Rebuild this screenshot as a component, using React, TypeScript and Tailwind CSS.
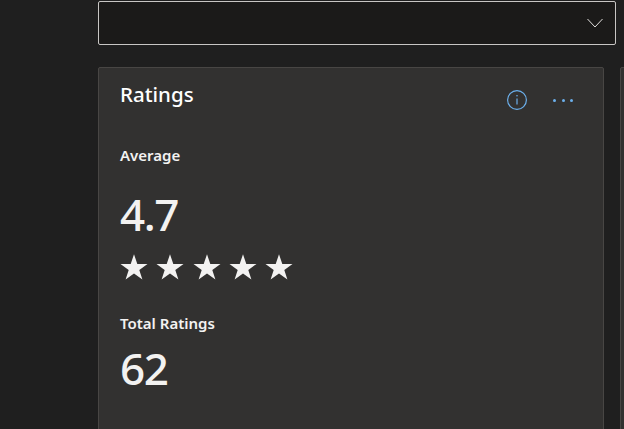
function Star() {
  return (
    <svg width="28" height="28" viewBox="0 0 28 28" className="shrink-0">
      <path d="M14 1.2l3.300 9.700h10.200l-8.200 6 3.100 9.700-8.400-6-8.400 6 3.100-9.700-8.200-6h10.200z" fill="#f3f2f1" />
    </svg>
  );
}

function InfoIcon() {
  return (
    <svg width="20" height="20" viewBox="0 0 20 20" fill="none" stroke="#6cb0ec" className="shrink-0">
      <circle cx="10" cy="10" r="9.400" strokeWidth="1.200" />
      <path d="M10 8.500v6" strokeWidth="1.200" />
      <circle cx="10" cy="5.800" r="0.800" fill="#6cb0ec" stroke="none" />
    </svg>
  );
}

export default function App() {
  return (
    <div className="flex h-[429px] w-[624px] overflow-hidden bg-[#1f1f1f] font-['Noto_Sans',sans-serif] text-[#f3f2f1]">
      <div className="w-[98px] shrink-0" />
      <div className="flex w-[518px] shrink-0 flex-col">
        <div className="mt-px flex h-[44px] shrink-0 items-center justify-end rounded-[2px] border border-[#c8c6c4] bg-[#1b1a19] pr-[12px]">
          <svg width="16" height="10" viewBox="0 0 16 10" fill="none" stroke="#e1dfdd" strokeWidth="1">
            <path d="M0.500 1l7.500 8 7.500-8" />
          </svg>
        </div>
        <div className="mt-[22px] flex shrink-0 gap-[16px]">
          <section className="h-[400px] w-[506px] shrink-0 rounded-[2px] border border-[#484644] bg-[#323130] pl-[21px] pr-[30px]">
            <div className="flex items-start justify-between">
              <h2 className="mt-[12px] text-[20.500px] leading-[28px] font-medium text-white">Ratings</h2>
              <div className="mt-[22px] flex items-center gap-[26px]">
                <InfoIcon />
                <div className="flex w-[20px] justify-between">
                  <span className="size-[3px] rounded-full bg-[#6cb0ec]" />
                  <span className="size-[3px] rounded-full bg-[#6cb0ec]" />
                  <span className="size-[3px] rounded-full bg-[#6cb0ec]" />
                </div>
              </div>
            </div>
            <p className="mt-[35px] text-[15px] leading-[20px] font-semibold">Average</p>
            <p className="mt-[21px] text-[44px] leading-[56px] font-medium tracking-[-1.500px]">4.7</p>
            <div className="mt-[11px] flex gap-[8.300px]">
              <Star />
              <Star />
              <Star />
              <Star />
              <Star />
            </div>
            <p className="mt-[32px] text-[15px] leading-[20px] font-semibold">Total Ratings</p>
            <p className="mt-[7px] text-[44px] leading-[56px] font-medium tracking-[-1.500px]">62</p>
          </section>
          <div className="h-[400px] w-[20px] shrink-0 rounded-[2px] border border-[#484644] bg-[#323130]" />
        </div>
      </div>
    </div>
  );
}
